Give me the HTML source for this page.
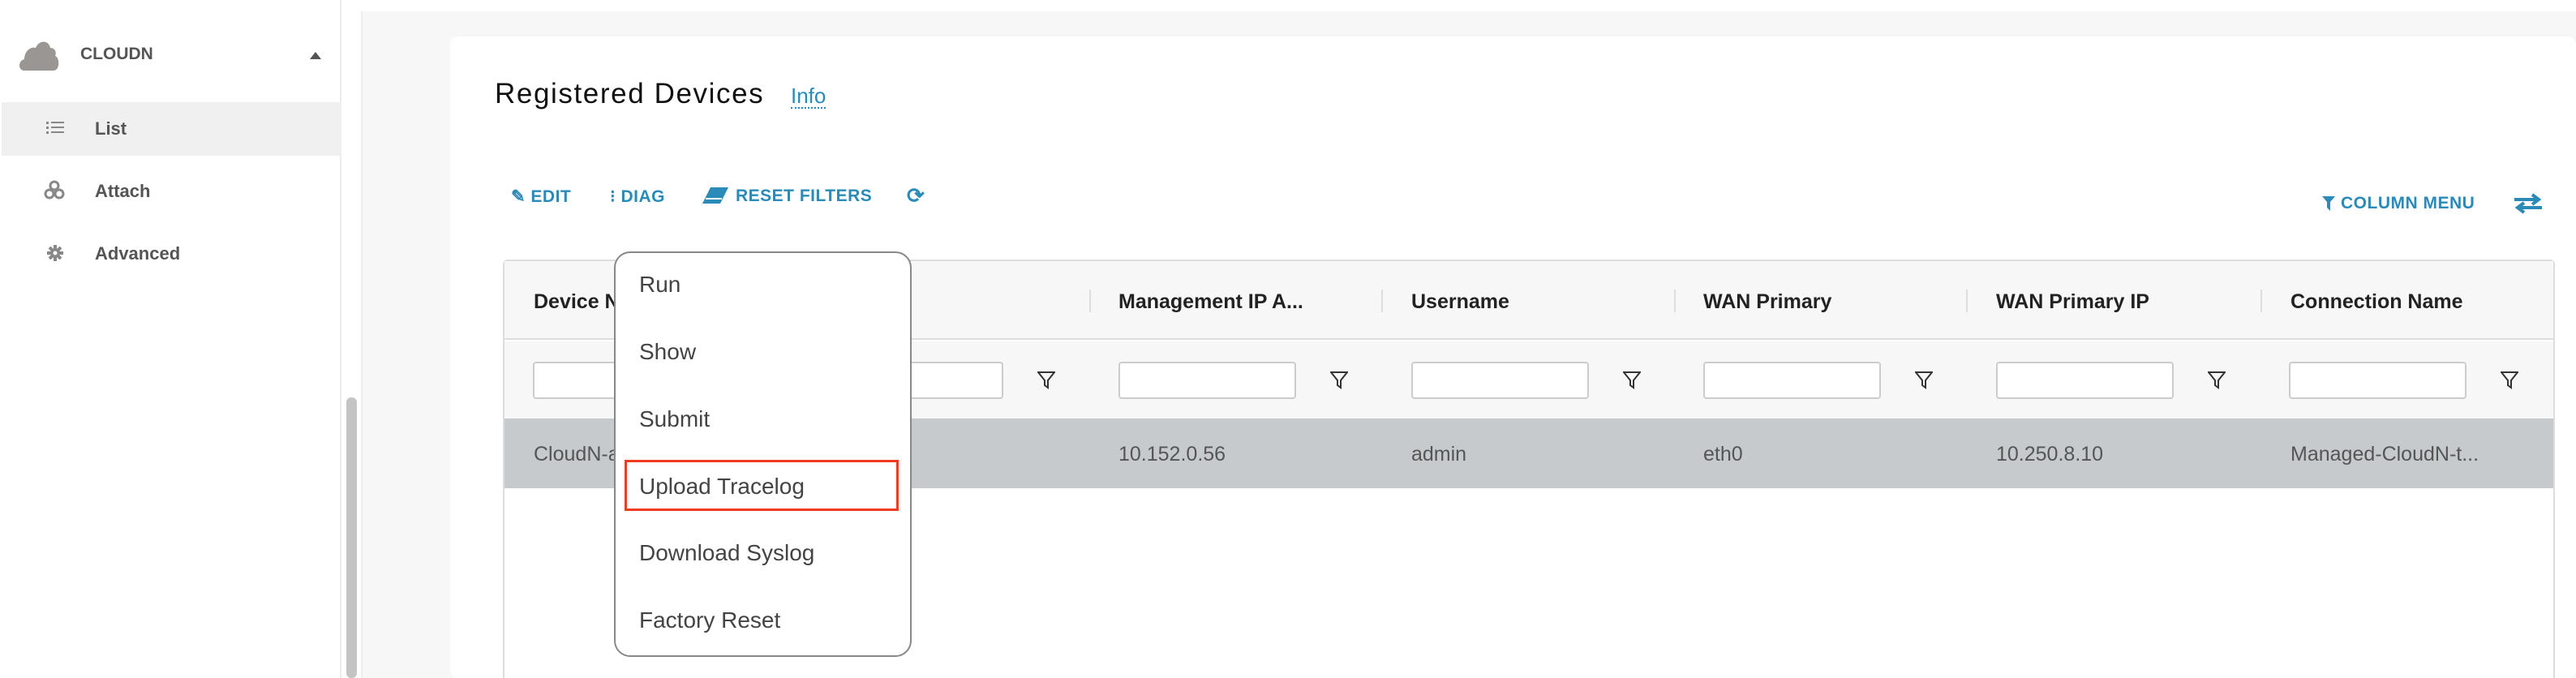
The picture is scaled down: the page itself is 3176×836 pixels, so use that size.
<!DOCTYPE html>
<html><head><meta charset="utf-8"><style>
*{box-sizing:border-box;margin:0;padding:0}
body{width:3176px;height:836px;overflow:hidden;background:#fff;font-family:"Liberation Sans",sans-serif;position:relative}
.a{position:absolute;white-space:nowrap}
.side{left:0;top:0;width:421px;height:836px;background:#fff;border-right:2px solid #ececec}
.nav{color:#555;font-size:22px;font-weight:bold}
.main{left:445px;top:14px;width:2731px;height:822px;background:#f7f7f7;border-left:2px solid #eee}
.card{left:555px;top:45px;width:2621px;height:791px;background:#fff;border-radius:10px}
.tb{color:#2a8ab8;font-size:21px;font-weight:bold;top:230px;letter-spacing:0.5px}
.th{font-size:25px;font-weight:bold;color:#222;top:358px}
.sep{width:2px;height:28px;background:#ddd;top:357px}
.inp{top:446px;width:219px;height:46px;background:#fff;border:2px solid #ccc;border-radius:4px}
.td{font-size:25px;color:#555;top:546px}
.mi{left:788px;font-size:28px;color:#444}
</style></head><body>
<div class="a side"></div>
<svg class="a" style="left:22px;top:47px" width="52" height="40" viewBox="0 0 52 40"><path d="M8 40 C0 40 0 28 8 26 C8 16 16 10 22 12 C26 2 38 2 40 12 C46 12 48 18 46 22 C52 24 52 40 44 40Z" fill="#9a9693"/></svg>
<div class="a nav" style="left:99px;top:55px;font-size:21px">CLOUDN</div>
<svg class="a" style="left:382px;top:64px" width="14" height="9"><path d="M0 9 L7 0 L14 9Z" fill="#555"/></svg>
<div class="a" style="left:2px;top:126px;width:419px;height:66px;background:#f0f0f0"></div>
<svg class="a" style="left:57px;top:149px" width="22" height="18"><g fill="#888"><rect x="0" y="1" width="3" height="3"/><rect x="0" y="7" width="3" height="3"/><rect x="0" y="13" width="3" height="3"/><rect x="6" y="1" width="16" height="2"/><rect x="6" y="7" width="16" height="2"/><rect x="6" y="13" width="16" height="2"/></g></svg>
<div class="a nav" style="left:117px;top:146px">List</div>
<svg class="a" style="left:54px;top:222px" width="26" height="24"><g fill="none" stroke="#888" stroke-width="3"><circle cx="13" cy="7" r="5"/><circle cx="7" cy="17" r="5"/><circle cx="19" cy="17" r="5"/></g></svg>
<div class="a nav" style="left:117px;top:223px">Attach</div>
<svg class="a" style="left:58px;top:302px" width="20" height="20"><circle cx="10" cy="10" r="6" fill="#888"/><g stroke="#888" stroke-width="4"><path d="M10 0V20M0 10H20M3 3L17 17M17 3L3 17"/></g><circle cx="10" cy="10" r="2.5" fill="#fff"/></svg>
<div class="a nav" style="left:117px;top:300px">Advanced</div>
<div class="a" style="left:427px;top:490px;width:13px;height:346px;background:#c4c4c4;border-radius:6px"></div>
<div class="a main"></div>
<div class="a card"></div>
<div class="a" style="left:610px;top:96px;font-size:35px;color:#111;letter-spacing:1.6px">Registered Devices</div>
<div class="a" style="left:975px;top:104px;font-size:26px;color:#2a8ab8;border-bottom:2px dotted #2a8ab8;line-height:28px">Info</div>
<div class="a tb" style="left:630px">✎ EDIT</div>
<div class="a tb" style="left:752px">⁝ DIAG</div>
<svg class="a" style="left:866px;top:229px" width="32" height="24"><path d="M10 2 H32 L22 22 H0Z" fill="#2a8ab8"/><path d="M4 16 H24" stroke="#fff" stroke-width="2"/></svg>
<div class="a tb" style="left:907px">RESET FILTERS</div>
<div class="a tb" style="left:1118px;top:226px;font-size:26px">⟳</div>
<svg class="a" style="left:2863px;top:242px" width="16" height="18"><path d="M0 0 H16 L10 7 V18 L6 14 V7Z" fill="#2a8ab8"/></svg>
<div class="a tb" style="left:2886px;top:239px">COLUMN MENU</div>
<svg class="a" style="left:3100px;top:238px" width="34" height="26"><path d="M0 8 H28 M22 2 L30 8 L22 14 M34 18 H6 M12 12 L4 18 L12 24" stroke="#2a8ab8" stroke-width="4" fill="none"/></svg>
<div class="a" style="left:620px;top:320px;width:2530px;height:516px;border:2px solid #ddd;border-bottom:none;border-radius:6px 6px 0 0;background:#fff"></div>
<div class="a" style="left:622px;top:322px;width:2526px;height:97px;background:#f7f7f7;border-bottom:2px solid #ddd"></div>
<div class="a" style="left:622px;top:421px;width:2526px;height:95px;background:#f7f7f7"></div>
<div class="a" style="left:622px;top:516px;width:2526px;height:86px;background:#c6cacc"></div>
<div class="a th" style="left:658px">Device Name</div>
<div class="a sep" style="left:1343px"></div><div class="a th" style="left:1379px">Management IP A...</div>
<div class="a sep" style="left:1703px"></div><div class="a th" style="left:1740px">Username</div>
<div class="a sep" style="left:2064px"></div><div class="a th" style="left:2100px">WAN Primary</div>
<div class="a sep" style="left:2424px"></div><div class="a th" style="left:2461px">WAN Primary IP</div>
<div class="a sep" style="left:2787px"></div><div class="a th" style="left:2824px">Connection Name</div>
<div class="a inp" style="left:657px"></div>
<div class="a inp" style="left:1018px"></div>
<div class="a inp" style="left:1379px"></div>
<div class="a inp" style="left:1740px"></div>
<div class="a inp" style="left:2100px"></div>
<div class="a inp" style="left:2461px"></div>
<div class="a inp" style="left:2822px"></div>
<svg width="0" height="0" style="position:absolute"><defs><path id="f" d="M1 1 H21 L13 11 V20 L9 17 V11Z" stroke="#333" stroke-width="2" fill="none"/></defs></svg>
<svg class="a" style="left:1279px;top:458px" width="22" height="22"><use href="#f"/></svg>
<svg class="a" style="left:1640px;top:458px" width="22" height="22"><use href="#f"/></svg>
<svg class="a" style="left:2001px;top:458px" width="22" height="22"><use href="#f"/></svg>
<svg class="a" style="left:2361px;top:458px" width="22" height="22"><use href="#f"/></svg>
<svg class="a" style="left:2722px;top:458px" width="22" height="22"><use href="#f"/></svg>
<svg class="a" style="left:3083px;top:458px" width="22" height="22"><use href="#f"/></svg>
<div class="a td" style="left:658px">CloudN-attached</div>
<div class="a td" style="left:1379px">10.152.0.56</div>
<div class="a td" style="left:1740px">admin</div>
<div class="a td" style="left:2100px">eth0</div>
<div class="a td" style="left:2461px">10.250.8.10</div>
<div class="a td" style="left:2824px">Managed-CloudN-t...</div>
<div class="a" style="left:757px;top:310px;width:367px;height:500px;background:#fff;border:2px solid #888;border-radius:20px"></div>
<div class="a mi" style="top:335px">Run</div>
<div class="a mi" style="top:418px">Show</div>
<div class="a mi" style="top:501px">Submit</div>
<div class="a mi" style="top:584px">Upload Tracelog</div>
<div class="a mi" style="top:666px">Download Syslog</div>
<div class="a mi" style="top:749px">Factory Reset</div>
<div class="a" style="left:770px;top:567px;width:338px;height:63px;border:3px solid #f03a22"></div>
</body></html>
